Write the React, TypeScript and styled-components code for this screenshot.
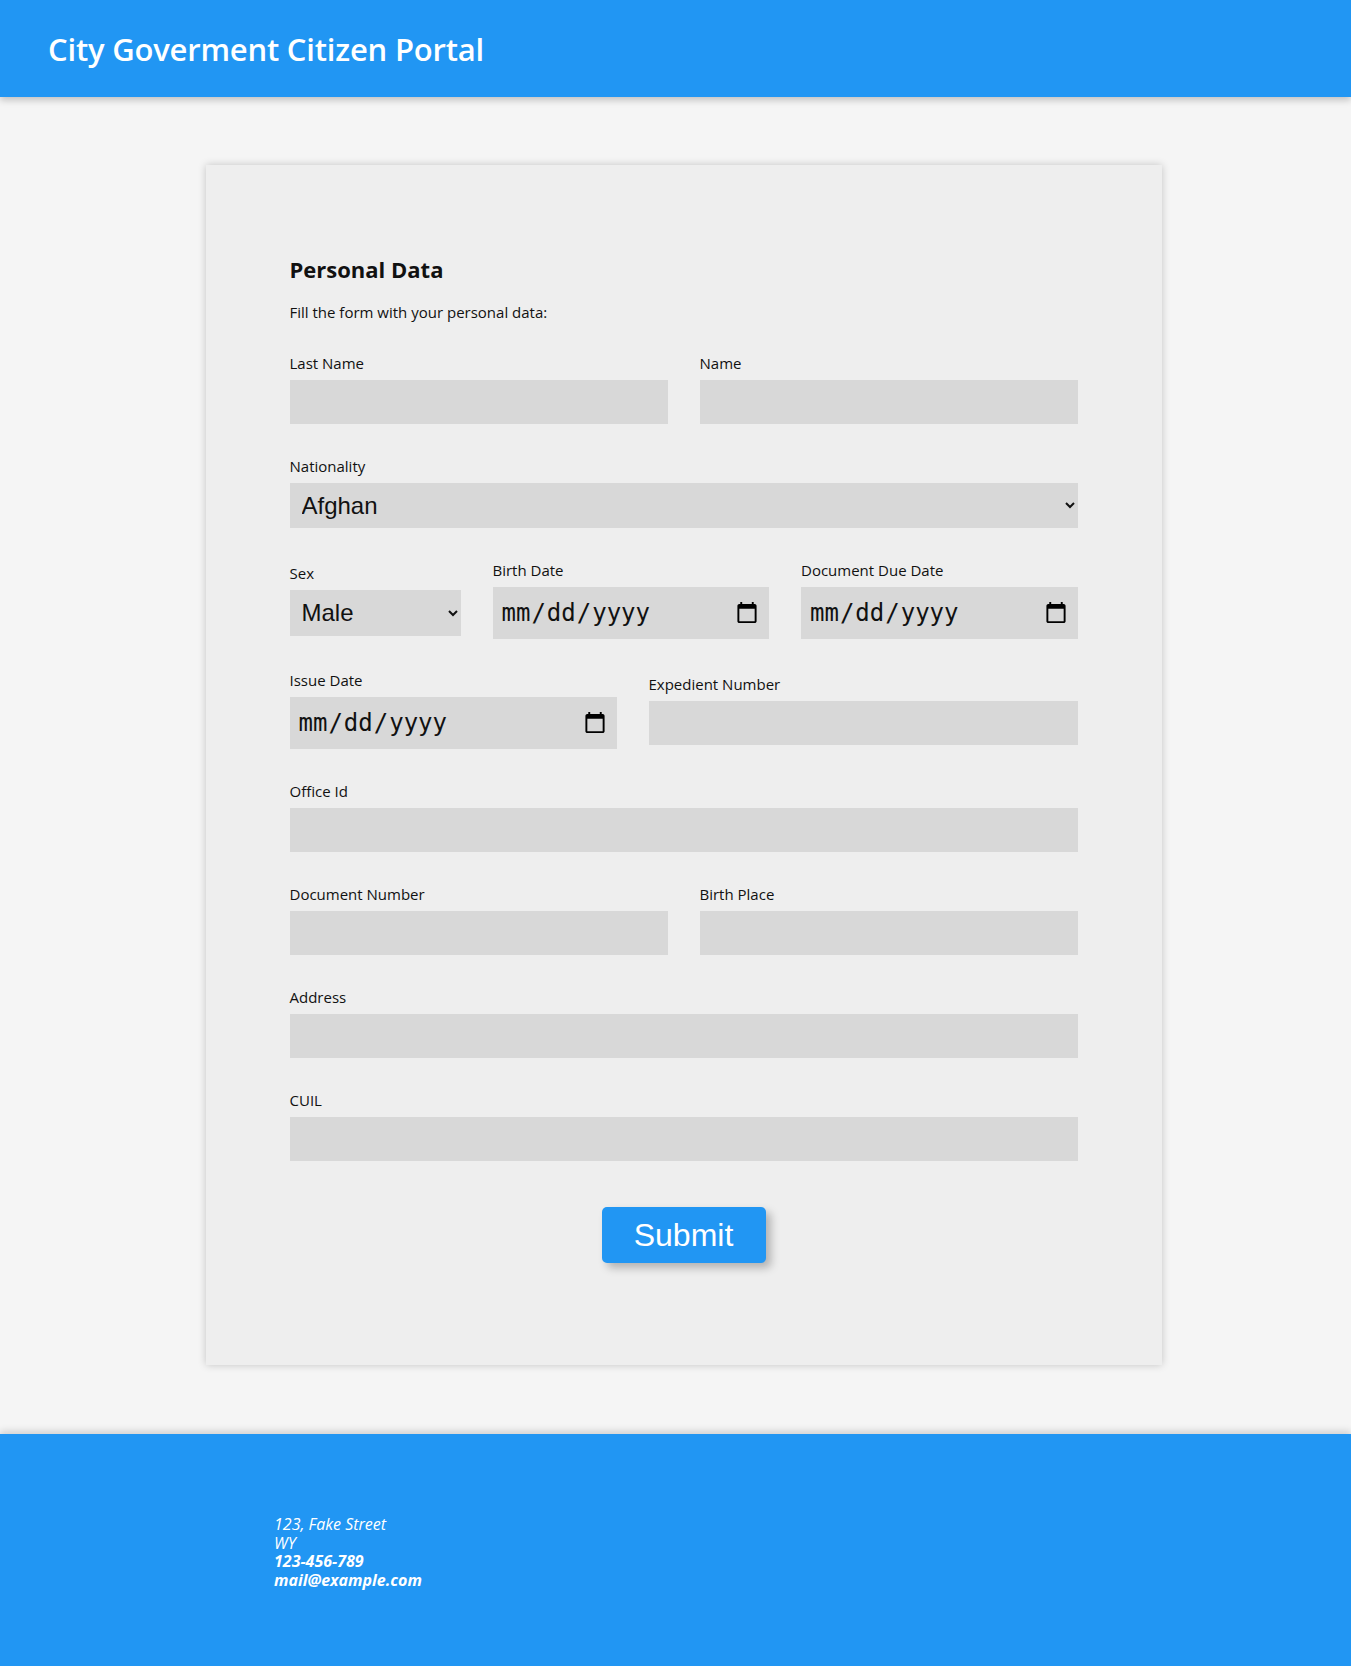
import React from "react";
import styled, { createGlobalStyle } from "styled-components";

const Global = createGlobalStyle`
  html, body { margin: 0; padding: 0; background: #f5f5f5; }
  body { font-family: "Open Sans", "Noto Sans", sans-serif; color: #111; }
  * { box-sizing: border-box; }
`;

const Page = styled.div`
  display: flex;
  flex-direction: column;
  min-height: 1666px;
`;

const Header = styled.header`
  height: 97px;
  background: #2196f3;
  display: flex;
  align-items: center;
  padding-left: 48px;
  box-shadow: 0 3px 7px rgba(0, 0, 0, 0.22);
  position: relative;
  z-index: 1;
`;

const Title = styled.h1`
  margin: 0;
  color: #fff;
  font-size: 31px;
  font-weight: 600;
  letter-spacing: -0.2px;
`;

const Main = styled.main`
  flex: 1;
  display: flex;
  justify-content: center;
  padding: 68px 0 69px 16px;
`;

const Card = styled.section`
  width: 956px;
  background: #eeeeee;
  box-shadow: 0 0 8px rgba(0, 0, 0, 0.2);
  padding: 91px 84px 101px;
  display: flex;
  flex-direction: column;
`;

const Heading = styled.h2`
  margin: 0;
  font-size: 22px;
  line-height: 26px;
  font-weight: 700;
`;

const Description = styled.p`
  margin: 21px 0 33px;
  font-size: 15px;
  line-height: 18px;
`;

const Row = styled.div`
  display: flex;
  align-items: center;
  gap: 32px;
  margin-bottom: 32.8px;
`;

const Field = styled.div<{ $w?: number }>`
  display: flex;
  flex-direction: column;
  gap: 8px;
  ${(p) => (p.$w ? `width: ${p.$w}px; flex: none;` : `flex: 1;`)}
`;

const Label = styled.label`
  font-size: 15px;
  line-height: 18px;
`;

const TextInput = styled.input`
  height: 44px;
  border: none;
  background: #d8d8d8;
  outline: none;
  padding: 0 10px;
  font-size: 16px;
`;

const DateInput = styled.input`
  height: 52px;
  border: none;
  background: #d8d8d8;
  outline: none;
  padding: 0 8px;
  font-family: "DejaVu Sans Mono", monospace;
  font-size: 24px;
  color: #111;
`;

const Select = styled.select<{ $h?: number }>`
  height: ${(p) => p.$h ?? 45}px;
  border: none;
  background: #d8d8d8;
  outline: none;
  padding: 0 4px 0 8px;
  font-family: "Liberation Sans", Arial, sans-serif;
  font-size: 24px;
  color: #111;
  border-radius: 0;
`;

const Actions = styled.div`
  display: flex;
  justify-content: center;
  margin-top: 14px;
`;

const SubmitButton = styled.button`
  width: 164px;
  height: 56px;
  border: none;
  border-radius: 5px;
  background: #2196f3;
  color: #fff;
  font-family: "Liberation Sans", Arial, sans-serif;
  font-size: 32px;
  box-shadow: 5px 5px 8px rgba(0, 0, 0, 0.25);
  cursor: pointer;
`;

const Footer = styled.footer`
  height: 232px;
  background: #2196f3;
  padding: 81px 0 0 274px;
  box-shadow: 0 -3px 7px rgba(0, 0, 0, 0.15);
`;

const FooterLine = styled.div<{ $bold?: boolean }>`
  color: #fff;
  font-style: italic;
  font-size: 16px;
  line-height: 18.7px;
  font-weight: ${(p) => (p.$bold ? 700 : 400)};
`;

export default function App() {
  return (
    <Page>
      <Global />
      <Header>
        <Title>City Goverment Citizen Portal</Title>
      </Header>
      <Main>
        <Card>
          <Heading>Personal Data</Heading>
          <Description>Fill the form with your personal data:</Description>
          <Row>
            <Field>
              <Label>Last Name</Label>
              <TextInput type="text" />
            </Field>
            <Field>
              <Label>Name</Label>
              <TextInput type="text" />
            </Field>
          </Row>
          <Row>
            <Field>
              <Label>Nationality</Label>
              <Select defaultValue="Afghan">
                <option>Afghan</option>
                <option>Argentinian</option>
              </Select>
            </Field>
          </Row>
          <Row>
            <Field $w={171}>
              <Label>Sex</Label>
              <Select $h={46} defaultValue="Male">
                <option>Male</option>
                <option>Female</option>
              </Select>
            </Field>
            <Field>
              <Label>Birth Date</Label>
              <DateInput type="date" />
            </Field>
            <Field>
              <Label>Document Due Date</Label>
              <DateInput type="date" />
            </Field>
          </Row>
          <Row>
            <Field $w={327}>
              <Label>Issue Date</Label>
              <DateInput type="date" />
            </Field>
            <Field>
              <Label>Expedient Number</Label>
              <TextInput type="text" />
            </Field>
          </Row>
          <Row>
            <Field>
              <Label>Office Id</Label>
              <TextInput type="text" />
            </Field>
          </Row>
          <Row>
            <Field>
              <Label>Document Number</Label>
              <TextInput type="text" />
            </Field>
            <Field>
              <Label>Birth Place</Label>
              <TextInput type="text" />
            </Field>
          </Row>
          <Row>
            <Field>
              <Label>Address</Label>
              <TextInput type="text" />
            </Field>
          </Row>
          <Row>
            <Field>
              <Label>CUIL</Label>
              <TextInput type="text" />
            </Field>
          </Row>
          <Actions>
            <SubmitButton type="button">Submit</SubmitButton>
          </Actions>
        </Card>
      </Main>
      <Footer>
        <FooterLine>123, Fake Street</FooterLine>
        <FooterLine>WY</FooterLine>
        <FooterLine $bold>123-456-789</FooterLine>
        <FooterLine $bold>mail@example.com</FooterLine>
      </Footer>
    </Page>
  );
}
